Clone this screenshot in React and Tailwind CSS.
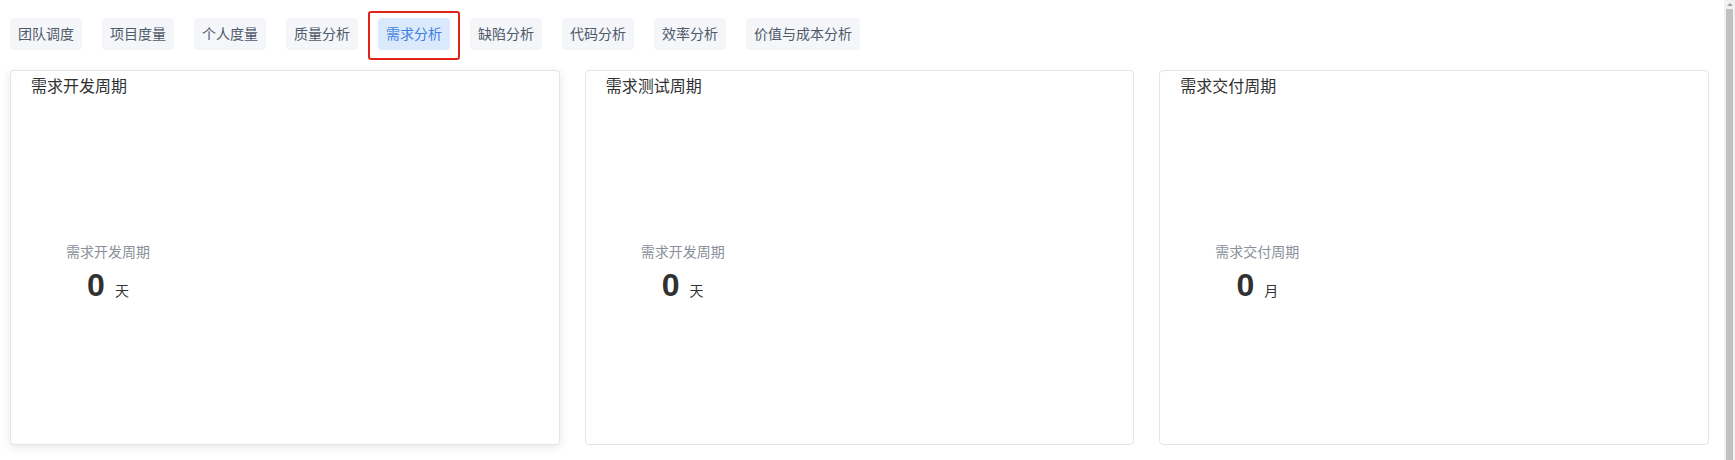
import React from "react";

const TABS = [
  "团队调度",
  "项目度量",
  "个人度量",
  "质量分析",
  "需求分析",
  "缺陷分析",
  "代码分析",
  "效率分析",
  "价值与成本分析",
];

const CARDS = [
  { title: "需求开发周期", label: "需求开发周期", unit: "天", hover: true },
  { title: "需求测试周期", label: "需求开发周期", unit: "天" },
  { title: "需求交付周期", label: "需求交付周期", unit: "月" },
];

function Tab({ name, active }) {
  return (
    <div className="relative">
      <button
        className={
          active
            ? "h-8 px-2 rounded-[4px] text-sm bg-[#dbe9fd] text-[#3d7fe0]"
            : "h-8 px-2 rounded-[4px] text-sm bg-[#f4f6fa] text-[#4e5969]"
        }
      >
        {name}
      </button>
      {/* annotation box around the active tab */}
      {active && (
        <span className="absolute -left-[10px] -right-[10px] -top-[7px] -bottom-[10px] border-[2px] border-[#e2231a] rounded-[3px] pointer-events-none" />
      )}
    </div>
  );
}

function StatCard({ card }) {
  return (
    <div
      className={
        card.hover
          ? "h-[375px] bg-white border border-[#e3e5e8] rounded-[4px] shadow-[0_2px_10px_rgba(0,0,0,0.10)]"
          : "h-[375px] bg-white border border-[#e3e5e8] rounded-[4px]"
      }
    >
      <div className="pl-[20px] pt-[4px] text-base leading-6 text-[#303133]">
        {card.title}
      </div>
      <div className="inline-flex flex-col items-center ml-[55px] mt-[142px]">
        <div className="text-sm leading-[22px] text-[#8a8f99]">{card.label}</div>
        <div className="flex items-baseline mt-[6px]">
          <span className="text-[32px] leading-none font-bold text-[#303133]">0</span>
          <span className="ml-[10px] text-sm text-[#303133]">{card.unit}</span>
        </div>
      </div>
    </div>
  );
}

// window scrollbar as seen in the capture
function ScrollBar() {
  return (
    <div className="fixed top-0 right-0 bottom-0 w-[11px] bg-[#f1f1f1] flex flex-col items-center">
      <div className="w-0 h-0 mt-[3px] border-l-[3px] border-r-[3px] border-b-[3px] border-l-transparent border-r-transparent border-b-[#a3a3a3]" />
      <div className="w-[7px] flex-1 mt-[3px] bg-[#c1c1c1]" />
    </div>
  );
}

export default function App() {
  return (
    <div
      className="h-[470px] bg-white"
      style={{ fontFamily: '"Liberation Sans", "Noto Sans CJK SC", sans-serif' }}
    >
      <div className="flex gap-[20px] pl-[10px] pt-[18px]">
        {TABS.map((t) => (
          <Tab key={t} name={t} active={t === "需求分析"} />
        ))}
      </div>

      <div className="grid grid-cols-3 gap-[25px] pl-[10px] pr-[26px] mt-[20px]">
        {CARDS.map((c) => (
          <StatCard key={c.title} card={c} />
        ))}
      </div>

      <ScrollBar />
    </div>
  );
}
